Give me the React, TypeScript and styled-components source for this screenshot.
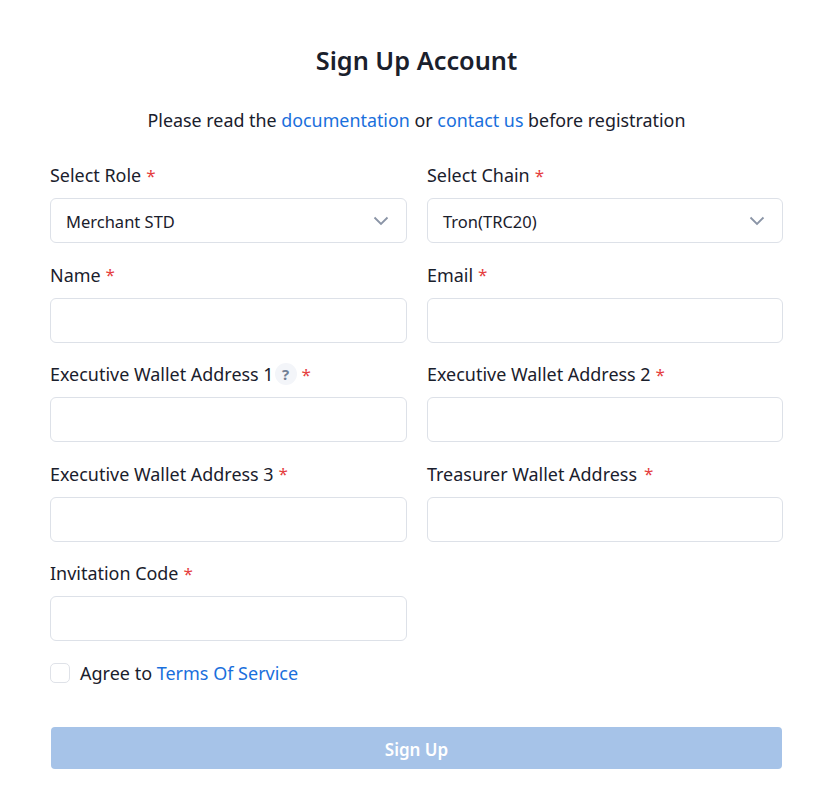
import { createGlobalStyle, styled } from "styled-components";

const GlobalStyle = createGlobalStyle`
  body {
    margin: 0;
    background: #fff;
    color: #1a202c;
    font-family: "Noto Sans", "Open Sans", sans-serif;
  }
`;

const Page = styled.div`
  width: 733px;
  margin-left: 50px;
  padding: 39px 0 42px;
`;

const Title = styled.h1`
  margin: 0;
  font-size: 25.3px;
  line-height: 42px;
  font-weight: 600;
  text-align: center;
`;

const Intro = styled.p`
  margin: 25px 0 0;
  font-size: 17.87px;
  line-height: 28px;
  text-align: center;
`;

const Anchor = styled.a`
  color: #1a6fdc;
  text-decoration: none;
`;

const FormGrid = styled.div`
  display: grid;
  grid-template-columns: 357px 356px;
  column-gap: 20px;
  row-gap: 18.5px;
  margin-top: 28px;
`;

const Field = styled.div`
  display: flex;
  flex-direction: column;
`;

const Label = styled.label`
  display: flex;
  align-items: center;
  height: 26px;
  margin-bottom: 10px;
  font-size: 17.95px;
  white-space: pre;
`;

const Star = styled.span<{ $gap?: number }>`
  color: #e53e3e;
  margin-left: ${(p) => p.$gap ?? 5}px;
  font-size: 17px;
`;

const Hint = styled.span`
  display: inline-flex;
  align-items: center;
  justify-content: center;
  width: 22px;
  height: 22px;
  margin-left: 1px;
  border-radius: 50%;
  background: #f3f5f9;
  color: #718096;
  font-size: 15px;
  font-weight: 700;
`;

const Input = styled.input`
  box-sizing: border-box;
  width: 100%;
  height: 45px;
  padding: 0 15px;
  border: 1px solid #dde1e8;
  border-radius: 6px;
  background: #fff;
  outline: none;
`;

const SelectBox = styled.div`
  box-sizing: border-box;
  display: flex;
  align-items: center;
  justify-content: space-between;
  height: 45px;
  padding: 1px 17px 0 15px;
  border: 1px solid #dde1e8;
  border-radius: 6px;
  font-size: 16.5px;
`;

const Chevron = styled.svg`
  width: 16px;
  height: 16px;
  fill: none;
  stroke: #8a94a6;
  stroke-width: 1.8;
`;

const AgreeRow = styled.div`
  display: flex;
  align-items: center;
  gap: 10px;
  margin-top: 19px;
  font-size: 18px;
  line-height: 26px;
`;

const CheckBox = styled.span`
  box-sizing: border-box;
  width: 20px;
  height: 20px;
  border: 1px solid #dfe2e8;
  border-radius: 5px;
`;

const Submit = styled.button`
  display: block;
  width: 731px;
  height: 42px;
  margin: 41px 0 0 1px;
  padding: 2px 0 0;
  border: 0;
  border-radius: 4px;
  background: #a6c3e8;
  color: #fff;
  font-family: inherit;
  font-size: 17px;
  font-weight: 600;
`;

const SelectField = ({ label, value }: { label: string; value: string }) => (
  <Field>
    <Label>
      {label}
      <Star>*</Star>
    </Label>
    <SelectBox>
      {value}
      <Chevron viewBox="0 0 16 16">
        <path d="M1.5 4.5 8 11l6.5-6.5" />
      </Chevron>
    </SelectBox>
  </Field>
);

const TextField = ({ label, gap }: { label: string; gap?: number }) => (
  <Field>
    <Label>
      {label}
      <Star $gap={gap}>*</Star>
    </Label>
    <Input />
  </Field>
);

export default function App() {
  return (
    <Page>
      <GlobalStyle />
      <Title>Sign Up Account</Title>
      <Intro>
        Please read the <Anchor href="#">documentation</Anchor> or{" "}
        <Anchor href="#">contact us</Anchor> before registration
      </Intro>
      <FormGrid>
        <SelectField label="Select Role" value="Merchant STD" />
        <SelectField label="Select Chain" value="Tron(TRC20)" />
        <TextField label="Name" />
        <TextField label="Email" />
        <Field>
          <Label>
            Executive Wallet Address 1<Hint>?</Hint>
            <Star>*</Star>
          </Label>
          <Input />
        </Field>
        <TextField label="Executive Wallet Address 2" />
        <TextField label="Executive Wallet Address 3" />
        <TextField label="Treasurer Wallet Address" gap={7} />
        <TextField label="Invitation Code" />
      </FormGrid>
      <AgreeRow>
        <CheckBox />
        <span>
          Agree to <Anchor href="#">Terms Of Service</Anchor>
        </span>
      </AgreeRow>
      <Submit disabled>Sign Up</Submit>
    </Page>
  );
}
